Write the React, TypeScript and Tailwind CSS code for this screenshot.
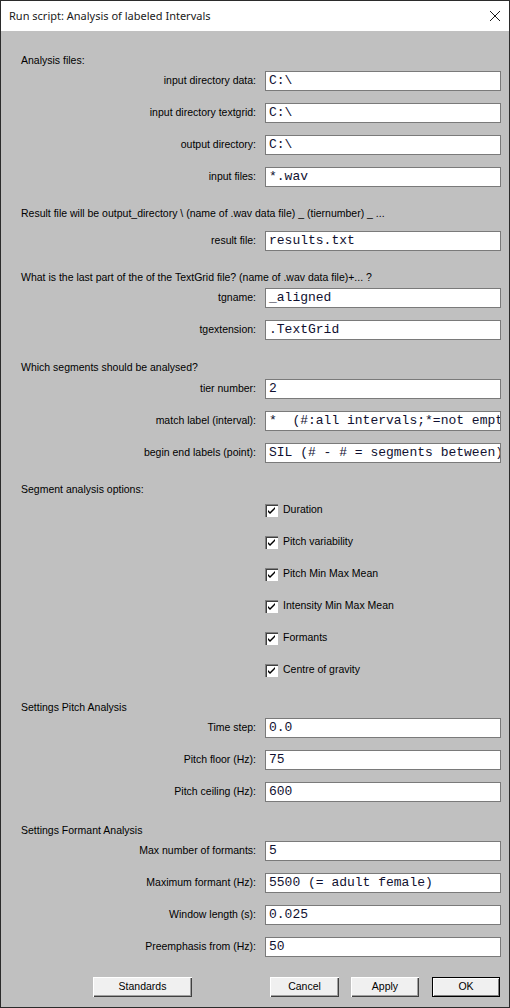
import React from "react";

const ui = { fontFamily: '"Liberation Sans", Arial, sans-serif' };
const mono = { fontFamily: '"Liberation Mono", "Courier New", monospace' };

function Heading({ children, className = "" }: { children: React.ReactNode; className?: string }) {
	return (
		<div className={`flex h-[20px] items-center pl-[20px] text-[10.5px] text-black ${className}`}>
			{children}
		</div>
	);
}

function Field({ label, value, className = "" }: { label: string; value: string; className?: string }) {
	return (
		<div className={`flex h-[20px] items-center ${className}`}>
			<div className="w-[255px] text-right text-[10.5px] text-black">{label}</div>
			<div
				className="ml-[9px] flex h-[20px] w-[236px] items-center overflow-hidden whitespace-pre border border-[#7a7a7a] bg-white pl-[3px] text-[13px] text-[#101030]"
				style={mono}
			>
				{value}
			</div>
		</div>
	);
}

function Check({ label, className = "" }: { label: string; className?: string }) {
	return (
		<div className={`flex h-[20px] items-center ${className}`}>
			<div className="w-[264px]" />
			<div className="relative h-[13px] w-[13px] border-t border-l border-[#808080] border-r-white border-b-white bg-white shadow-[inset_1px_1px_0_#404040]">
				<svg className="absolute left-[2px] top-[2px]" width="8" height="8" viewBox="0 0 8 8">
					<path d="M0 3 L2 5 L7 0 L7 2 L2 7 L0 5 Z" fill="#000" />
				</svg>
			</div>
			<span className="ml-[5px] text-[10.5px] text-black">{label}</span>
		</div>
	);
}

function Btn({ children, className = "", primary = false }: { children: React.ReactNode; className?: string; primary?: boolean }) {
	return (
		<div
			className={`flex h-[20px] items-center justify-center bg-[#f0f0f0] text-[10.5px] text-black ${
				primary
					? "border border-black shadow-[inset_1px_1px_0_#fff,inset_-1px_-1px_0_#808080]"
					: "shadow-[inset_1px_1px_0_#fff,inset_-1px_-1px_0_#404040,inset_-2px_-2px_0_#a0a0a0]"
			} ${className}`}
		>
			{children}
		</div>
	);
}

export default function App() {
	return (
		<div className="flex h-[1008px] w-[510px] flex-col border border-[#2b2b2b] bg-[#c0c0c0]" style={ui}>
			<div className="flex h-[30px] items-center justify-between bg-white pl-[8px] pr-[8px]">
				<span className="text-[11px] text-[#1a1a1a]" style={{ fontFamily: '"Noto Sans", "Open Sans", sans-serif' }}>
					Run script: Analysis of labeled Intervals
				</span>
				<svg width="12" height="12" viewBox="0 0 12 12">
					<path d="M1 1 L11 11 M11 1 L1 11" stroke="#1a1a1a" strokeWidth="1" />
				</svg>
			</div>
			<div className="flex flex-col pt-[20px]">
				<Heading>Analysis files:</Heading>
				<Field label="input directory data:" value="C:\" />
				<Field label="input directory textgrid:" value="C:\" className="mt-[12px]" />
				<Field label="output directory:" value="C:\" className="mt-[12px]" />
				<Field label="input files:" value="*.wav" className="mt-[12px]" />

				<Heading className="mt-[17px]">Result file will be output_directory \ (name of .wav data file) _ (tiernumber) _ ...</Heading>
				<Field label="result file:" value="results.txt" className="mt-[7px]" />

				<Heading className="mt-[17px]">What is the last part of the of the TextGrid file? (name of .wav data file)+... ?</Heading>
				<Field label="tgname:" value="_aligned" />
				<Field label="tgextension:" value=".TextGrid" className="mt-[12px]" />

				<Heading className="mt-[18px]">Which segments should be analysed?</Heading>
				<Field label="tier number:" value="2" className="mt-[1px]" />
				<Field label="match label (interval):" value="*  (#:all intervals;*=not empty)" className="mt-[12px]" />
				<Field label="begin end labels (point):" value="SIL (# - # = segments between)" className="mt-[12px]" />

				<Heading className="mt-[17px]">Segment analysis options:</Heading>
				<Check label="Duration" />
				<Check label="Pitch variability" className="mt-[12px]" />
				<Check label="Pitch Min Max Mean" className="mt-[12px]" />
				<Check label="Intensity Min Max Mean" className="mt-[12px]" />
				<Check label="Formants" className="mt-[12px]" />
				<Check label="Centre of gravity" className="mt-[12px]" />

				<Heading className="mt-[18px]">Settings Pitch Analysis</Heading>
				<Field label="Time step:" value="0.0" />
				<Field label="Pitch floor (Hz):" value="75" className="mt-[12px]" />
				<Field label="Pitch ceiling (Hz):" value="600" className="mt-[12px]" />

				<Heading className="mt-[19px]">Settings Formant Analysis</Heading>
				<Field label="Max number of formants:" value="5" />
				<Field label="Maximum formant (Hz):" value="5500 (= adult female)" className="mt-[12px]" />
				<Field label="Window length (s):" value="0.025" className="mt-[12px]" />
				<Field label="Preemphasis from (Hz):" value="50" className="mt-[12px]" />

				<div className="mt-[20px] flex">
					<Btn className="ml-[92px] w-[99px]">Standards</Btn>
					<Btn className="ml-[78px] w-[69px]">Cancel</Btn>
					<Btn className="ml-[12px] w-[68px]">Apply</Btn>
					<Btn className="ml-[13px] w-[68px]" primary>
						OK
					</Btn>
				</div>
			</div>
		</div>
	);
}
